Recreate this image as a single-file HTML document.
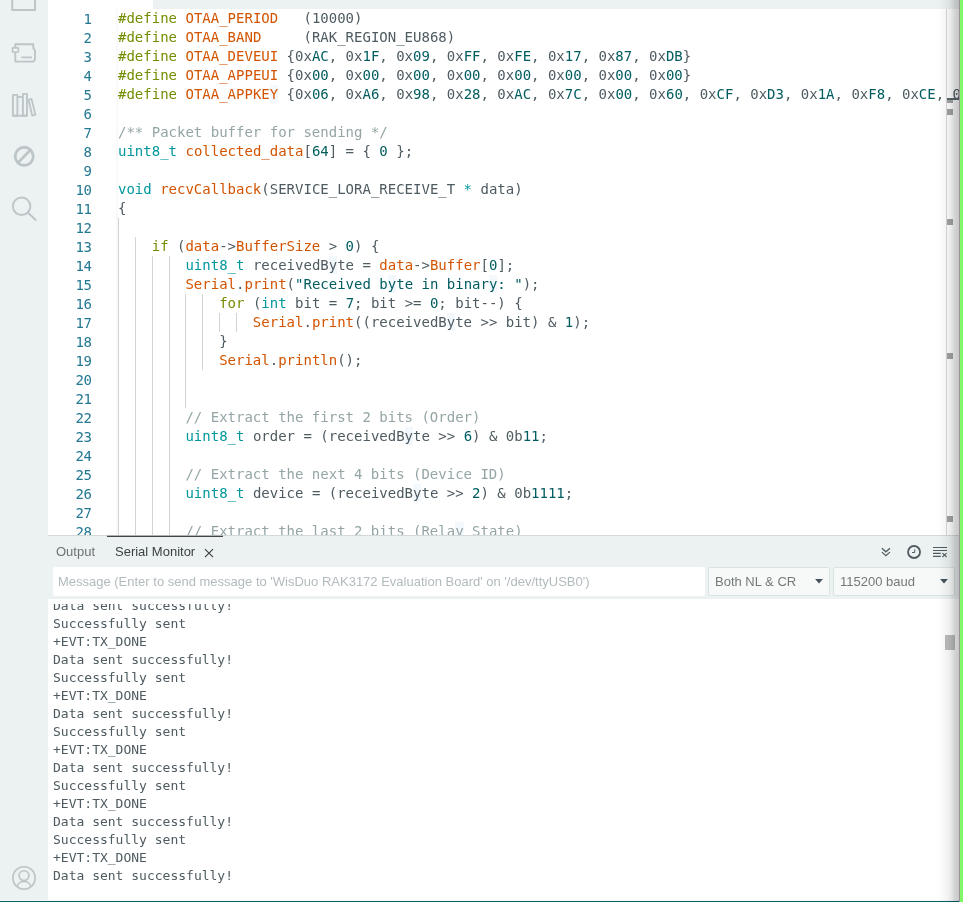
<!DOCTYPE html>
<html lang="en">
<head>
<meta charset="utf-8">
<title>Arduino IDE</title>
<style>
*{box-sizing:border-box;margin:0;padding:0}
html,body{width:963px;height:902px;overflow:hidden;background:#fff}
body{position:relative;font-family:"Liberation Sans",sans-serif;color:#4e5b61}
.abs{position:absolute}
#sidebar{left:0;top:0;width:48px;height:900px;background:#ecf1f1}
#topstrip{left:152.6px;top:0;width:807.4px;height:9px;background:#ecf1f1;border-bottom-left-radius:1px}
#editor{left:48px;top:9px;width:912px;height:526px;background:#fff;overflow:hidden}
#nums{left:0;top:1px;width:43.45px;text-align:right;color:#237893;letter-spacing:-0.45px}
#code{left:70.3px;top:0;white-space:pre;color:#4e5b61}
#nums,#code,#serial .txt,.tab,#input,.sel{will-change:transform}
#nums,#code{font-family:"DejaVu Sans Mono","Liberation Mono",monospace;font-size:14px;line-height:19px}
.ln{height:19px}
.k{color:#728e00}.t{color:#00979d}.o{color:#d35400}.n{color:#005c5f}.s{color:#005c5f}.c{color:#95a5a6}
#code i{font-style:normal;background:#f3f8fd;padding:1.35px 0}
.g{position:absolute;width:1px;background:#d3d3d3}
.ga{background:#d3d3d3}
#faint{left:116px;top:9px;width:2px;height:526px;background:#f8fafa}
#ruler{left:946px;top:9px;width:1px;height:526px;background:#d9d9d9}
.mk{position:absolute;left:947px;width:6px;height:6px;background:#a3a3a3}
#panel{left:48px;top:535px;width:912px;height:64px;background:#ecf1f1;border-top:1px solid #d3d9d9}
#tabline{left:107px;top:536px;width:116px;height:1px;background:#424444;box-shadow:0 -1px 0 rgba(66,68,68,.25)}
.tab{position:absolute;top:544px;font-size:13px;line-height:16px;white-space:nowrap}
#input{left:53px;top:567px;width:652px;height:29px;background:#fff;border-radius:2px;font-size:13px;line-height:29px;padding-left:4.9px;color:#b2bbbe;white-space:nowrap;overflow:hidden}
.sel{position:absolute;top:567px;height:29px;border:1px solid #dae3e3;border-radius:2px;font-size:13px;line-height:27px;padding-left:6px;color:#737979;background:#f7f9f9}
.sel svg{right:5.6px;top:10.6px}
#serial{left:48px;top:599px;width:912px;height:301px;background:#fff;overflow:hidden}
#serial .clip{position:absolute;left:0;top:5px;width:912px;height:296px;overflow:hidden}
#serial .txt{position:absolute;left:5px;top:-7px;font-family:"DejaVu Sans Mono","Liberation Mono",monospace;font-size:13px;line-height:18px;white-space:pre;color:#4e5b61}
#thumb{left:945px;top:635px;width:10px;height:15px;background:#bdbdbd}
#bot0{left:0;top:900px;width:960px;height:1px;background:#f6f9f9}
#bot1{left:0;top:901px;width:960px;height:1px;background:#006468}
#shadow{left:938px;top:0;width:21px;height:902px;background:linear-gradient(to right,rgba(0,0,0,0) 0,rgba(0,0,0,.008) 2px,rgba(0,0,0,.027) 5.5px,rgba(0,0,0,.046) 9.5px,rgba(0,0,0,.098) 13.5px,rgba(0,0,0,.145) 15.5px,rgba(0,0,0,.18) 17.5px,rgba(0,0,0,.2) 19.5px,rgba(0,0,0,.22) 21px)}
#edge{left:959px;top:0;width:1px;height:902px;background:#9a919b}
#green{left:960px;top:0;width:3px;height:902px;background:#80f868}
svg{position:absolute;overflow:visible}
</style>
</head>
<body>
<div id="sidebar" class="abs"></div>
<div id="topstrip" class="abs"></div>
<div id="editor" class="abs">
<div id="nums" class="abs">
<div class="ln">1</div>
<div class="ln">2</div>
<div class="ln">3</div>
<div class="ln">4</div>
<div class="ln">5</div>
<div class="ln">6</div>
<div class="ln">7</div>
<div class="ln">8</div>
<div class="ln">9</div>
<div class="ln">10</div>
<div class="ln">11</div>
<div class="ln">12</div>
<div class="ln">13</div>
<div class="ln">14</div>
<div class="ln">15</div>
<div class="ln">16</div>
<div class="ln">17</div>
<div class="ln">18</div>
<div class="ln">19</div>
<div class="ln">20</div>
<div class="ln">21</div>
<div class="ln">22</div>
<div class="ln">23</div>
<div class="ln">24</div>
<div class="ln">25</div>
<div class="ln">26</div>
<div class="ln">27</div>
<div class="ln">28</div>
</div>
<div id="code" class="abs"><div class="ln"><span class="k">#define</span> <span class="o">OTAA_PERIOD</span>   (10000)</div><div class="ln"><span class="k">#define</span> <span class="o">OTAA_BAND</span>     (RAK_REGION_EU868)</div><div class="ln"><span class="k">#define</span> <span class="o">OTAA_DEVEUI</span> {0x<span class="n">AC</span>, 0x<span class="n">1F</span>, 0x<span class="n">09</span>, 0x<span class="n">FF</span>, 0x<span class="n">FE</span>, 0x<span class="n">17</span>, 0x<span class="n">87</span>, 0x<span class="n">DB</span>}</div><div class="ln"><span class="k">#define</span> <span class="o">OTAA_APPEUI</span> {0x<span class="n">00</span>, 0x<span class="n">00</span>, 0x<span class="n">00</span>, 0x<span class="n">00</span>, 0x<span class="n">00</span>, 0x<span class="n">00</span>, 0x<span class="n">00</span>, 0x<span class="n">00</span>}</div><div class="ln"><span class="k">#define</span> <span class="o">OTAA_APPKE<i>Y</i></span> {0x<span class="n">06</span>, 0x<span class="n">A6</span>, 0x<span class="n">98</span>, 0x<span class="n">28</span>, 0x<span class="n">AC</span>, 0x<span class="n">7C</span>, 0x<span class="n">00</span>, 0x<span class="n">60</span>, 0x<span class="n">CF</span>, 0x<span class="n">D3</span>, 0x<span class="n">1A</span>, 0x<span class="n">F8</span>, 0x<span class="n">CE</span>, 0x<span class="n">3B</span>, 0x<span class="n">52</span>, 0x<span class="n">9D</span>}</div><div class="ln"></div><div class="ln"><span class="c">/** Packet buffer for sending */</span></div><div class="ln"><span class="t">uint8_t</span> <span class="o">collected_data</span>[<span class="n">64</span>] = { <span class="n">0</span> };</div><div class="ln"></div><div class="ln"><span class="t">void</span> <span class="o">recvCallback</span>(SERVICE_LORA_RECEIVE_T <span class="t">*</span> data)</div><div class="ln">{</div><div class="ln"></div><div class="ln">    <span class="k">if</span> (<span class="o">data</span>-&gt;<span class="o">BufferSize</span> &gt; <span class="n">0</span>) {</div><div class="ln">        <span class="t">uint8_t</span> receivedB<i>y</i>te = <span class="o">data</span>-&gt;<span class="o">Buffer</span>[<span class="n">0</span>];</div><div class="ln">        <span class="o">Serial</span>.<span class="o">print</span>(<span class="s">"Received b<i>y</i>te in binar<i>y</i>: "</span>);</div><div class="ln">            <span class="k">for</span> (<span class="t">int</span> bit = <span class="n">7</span>; bit &gt;= <span class="n">0</span>; bit--) {</div><div class="ln">                <span class="o">Serial</span>.<span class="o">print</span>((receivedB<i>y</i>te &gt;&gt; bit) &amp; <span class="n">1</span>);</div><div class="ln">            }</div><div class="ln">            <span class="o">Serial</span>.<span class="o">println</span>();</div><div class="ln"></div><div class="ln"></div><div class="ln">        <span class="c">// Extract the first 2 bits (Order)</span></div><div class="ln">        <span class="t">uint8_t</span> order = (receivedB<i>y</i>te &gt;&gt; <span class="n">6</span>) &amp; 0b<span class="n">11</span>;</div><div class="ln"></div><div class="ln">        <span class="c">// Extract the next 4 bits (Device ID)</span></div><div class="ln">        <span class="t">uint8_t</span> device = (receivedB<i>y</i>te &gt;&gt; <span class="n">2</span>) &amp; 0b<span class="n">1111</span>;</div><div class="ln"></div><div class="ln">        <span class="c">// Extract the last 2 bits (Rela<i>y</i> State)</span></div></div>
</div>
<div id="faint" class="abs"></div>
<div class="g ga" style="left:118px;top:218px;height:323px"></div>
<div class="g" style="left:135px;top:237px;height:304px"></div>
<div class="g" style="left:152px;top:256px;height:285px"></div>
<div class="g" style="left:169px;top:256px;height:285px"></div>
<div class="g" style="left:185px;top:294px;height:114px"></div>
<div class="g" style="left:202px;top:294px;height:76px"></div>
<div class="g" style="left:219px;top:313px;height:19px"></div>
<div class="g" style="left:236px;top:313px;height:19px"></div>
<div id="ruler" class="abs"></div>
<div class="abs" style="left:947px;top:98px;width:13px;height:2px;background:#59686e"></div>
<div class="mk" style="top:100px;height:3px"></div>
<div class="mk" style="top:109px"></div>
<div class="mk" style="top:219px"></div>
<div class="mk" style="top:353px"></div>
<div class="mk" style="top:516px"></div>

<div id="panel" class="abs"></div>
<div id="tabline" class="abs"></div>
<div class="tab" style="left:56px;color:#6e7272">Output</div>
<div class="tab" style="left:115px;color:#3d4142">Serial Monitor</div>
<svg style="left:204px;top:548px" width="10" height="10" viewBox="0 0 10 10"><path d="M1 1.2 L9 9.2 M9 1.2 L1 9.2" stroke="#424546" stroke-width="1.2" fill="none"/></svg>
<div id="input" class="abs">Message (Enter to send message to 'WisDuo RAK3172 Evaluation Board' on '/dev/ttyUSB0')</div>
<div class="sel" style="left:708px;width:122px">Both NL &amp; CR<svg width="8" height="5" viewBox="0 0 8 5"><path d="M0.1 0.1 H7.9 L4 4.5 Z" fill="#45525a"/></svg></div>
<div class="sel" style="left:833px;width:122px">115200 baud<svg width="8" height="5" viewBox="0 0 8 5"><path d="M0.1 0.1 H7.9 L4 4.5 Z" fill="#45525a"/></svg></div>

<!-- panel toolbar icons -->
<svg style="left:880px;top:546px" width="12" height="12" viewBox="0 0 12 12"><path d="M1.9 2.3 L5.9 5.8 L9.9 2.3 M1.9 6.1 L5.9 9.6 L9.9 6.1" stroke="#4e5b61" stroke-width="1.25" fill="none"/></svg>
<svg style="left:906px;top:544px" width="16" height="16" viewBox="0 0 16 16"><circle cx="8.05" cy="8" r="6" stroke="#4e5b61" stroke-width="1.8" fill="none"/><path d="M8.7 5.4 V8.5 H6" stroke="#4e5b61" stroke-width="1" fill="none"/></svg>
<svg style="left:933px;top:546px" width="15" height="12" viewBox="0 0 15 12"><path d="M0 1.5 H14 M0 4.5 H14 M0 7.4 H7.8 M0 10.4 H7.8" stroke="#4e5b61" stroke-width="1.1" fill="none"/><path d="M9.4 7.2 L13.6 11 M13.6 7.2 L9.4 11" stroke="#4e5b61" stroke-width="1.05" fill="none"/></svg>

<div id="serial" class="abs"><div class="clip"><div class="txt"><div>Data sent successfully!</div><div>Successfully sent</div><div>+EVT:TX_DONE</div><div>Data sent successfully!</div><div>Successfully sent</div><div>+EVT:TX_DONE</div><div>Data sent successfully!</div><div>Successfully sent</div><div>+EVT:TX_DONE</div><div>Data sent successfully!</div><div>Successfully sent</div><div>+EVT:TX_DONE</div><div>Data sent successfully!</div><div>Successfully sent</div><div>+EVT:TX_DONE</div><div>Data sent successfully!</div></div></div></div>
<div id="thumb" class="abs"></div>

<!-- sidebar icons -->
<svg style="left:0;top:0" width="48" height="240" viewBox="0 0 48 240" fill="none" stroke="#bcc5c7" stroke-linejoin="round">
<path d="M12.2 -4 V10 H35 V-4" stroke-width="2"/>
<path d="M15.3 47.5 V44.3 H33.3 V48.2 L35 50.6 V59.6 L33.3 61.6 H15.3 V52.5" stroke-width="1.9"/>
<rect x="12.6" y="47.9" width="5.7" height="4.1" stroke-width="1.7" fill="#f3f6f6"/>
<path d="M21.3 57.4 H31.9" stroke-width="1.7"/>
<rect x="12.9" y="94.9" width="4.5" height="20.8" stroke-width="1.9"/>
<path d="M17.5 97 H22.6" stroke-width="1.9"/>
<rect x="22.9" y="93.9" width="4.1" height="21.8" stroke-width="1.9"/>
<path d="M28.6 99.8 L31.5 98.9 L35.4 114.6 L32.2 115.6 Z" stroke-width="1.8"/>
<path d="M12.9 115.7 H27" stroke-width="1.9"/>
<circle cx="24.2" cy="156.3" r="9.05" stroke-width="2.8"/>
<path d="M18 162.6 L30.4 150" stroke-width="2.7"/>
<circle cx="21.6" cy="206.3" r="8.75" stroke-width="1.9"/>
<path d="M28 212.7 L35.5 219.7" stroke-width="2" stroke-linecap="round"/>
</svg>
<svg style="left:0;top:860px" width="48" height="40" viewBox="0 860 48 40" fill="none" stroke="#bcc5c7">
<circle cx="24" cy="877.9" r="11.2" stroke-width="1.6"/>
<circle cx="24" cy="875.6" r="4.9" stroke-width="1.6"/>
<path d="M17.2 886.8 C17.8 879.8 30.2 879.8 30.8 886.8" stroke-width="1.6"/>
</svg>

<div id="bot0" class="abs"></div>
<div id="bot1" class="abs"></div>
<div id="shadow" class="abs"></div>
<div id="edge" class="abs"></div>
<div id="green" class="abs"></div>
</body>
</html>
